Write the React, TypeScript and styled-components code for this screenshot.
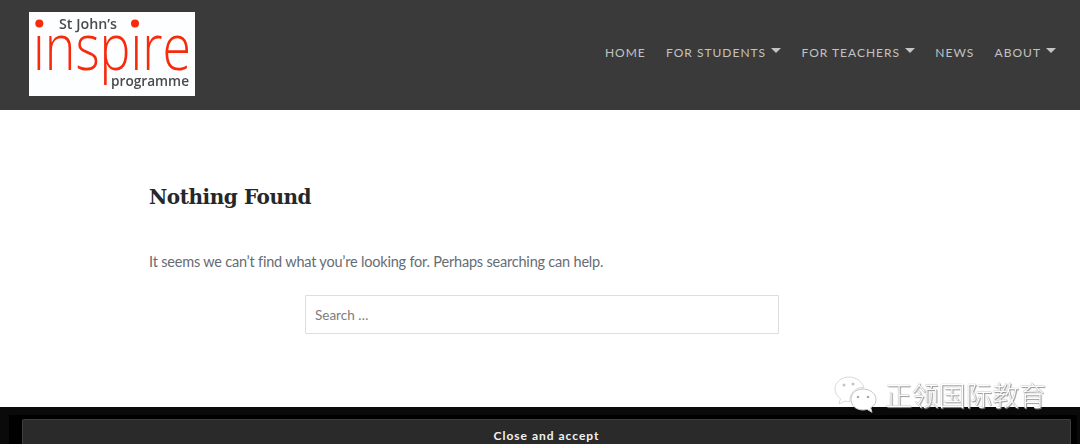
import styled, { createGlobalStyle } from 'styled-components';

const GlobalStyle = createGlobalStyle`
	html, body {
		margin: 0;
		padding: 0;
		height: 444px;
		overflow: hidden;
		background: #fff;
		font-family: Lato, "Liberation Sans", sans-serif;
	}
	* {
		box-sizing: border-box;
	}
`;

const Page = styled.div`
	position: relative;
	display: flex;
	flex-direction: column;
	width: 1080px;
	height: 444px;
	overflow: hidden;
`;

const Header = styled.header`
	display: flex;
	justify-content: space-between;
	align-items: center;
	flex: 0 0 110px;
	padding: 0 24px 0 29px;
	background: #3a3a3a;
`;

const LogoBox = styled.a`
	display: block;
	width: 166px;
	height: 84px;
	margin-top: -2px;
	background: #fcfeff;
	filter: blur(0.4px);

	svg {
		display: block;
	}
`;

const Nav = styled.nav`
	display: flex;
	align-items: center;
	gap: 20.3px;
	margin-top: -6px;
`;

const NavItem = styled.a`
	display: flex;
	align-items: center;
	gap: 5px;
	color: #c2c2c2;
	font-size: 12px;
	font-weight: 400;
	letter-spacing: 1px;
	text-transform: uppercase;
	white-space: nowrap;
`;

const Caret = styled.span`
	width: 0;
	height: 0;
	margin-top: -3px;
	border-top: 5px solid #c4c4c4;
	border-left: 5px solid transparent;
	border-right: 5px solid transparent;
`;

const Main = styled.main`
	flex: 1;
	min-height: 0;
	padding: 73px 0 0 149px;
	background: #fff;
`;

const Title = styled.h1`
	margin: 0;
	color: #252729;
	font-family: "DejaVu Serif", "Liberation Serif", serif;
	font-size: 20px;
	font-weight: 700;
	line-height: 28px;
	letter-spacing: -0.45px;
`;

const Message = styled.p`
	margin: 39px 0 0;
	color: #666c74;
	font-size: 14.5px;
	line-height: 24px;
	letter-spacing: -0.2px;
`;

const SearchForm = styled.form`
	margin: 21px 0 0 156px;
`;

const SearchInput = styled.input`
	display: block;
	width: 474px;
	height: 39px;
	padding: 0 9px;
	border: 1px solid #dddddd;
	border-radius: 1px;
	background: #fff;
	font-family: Lato, "Liberation Sans", sans-serif;
	font-size: 13.5px;

	&::placeholder {
		color: #7d7d7d;
		opacity: 1;
	}
`;

const CookieBar = styled.div`
	flex: 0 0 37px;
	min-height: 0;
	overflow: hidden;
	padding: 4px 6px 0 13px;
	background: #000;
	border-style: solid;
	border-color: #0a0a0a;
	border-width: 8px 3px 0 9px;
`;

const CookieButton = styled.button`
	display: block;
	width: 100%;
	height: 32px;
	padding: 0;
	border: 1px solid #3f3f3f;
	border-bottom: 0;
	border-radius: 2px 2px 0 0;
	background: #2a2a2a;
	color: #f2f2f2;
	font-family: Lato, "Liberation Sans", sans-serif;
	font-size: 12px;
	font-weight: 700;
	letter-spacing: 1px;
	line-height: 16px;
	text-align: center;
`;

const Watermark = styled.div`
	position: absolute;
	left: 834px;
	top: 375px;
	display: flex;
	align-items: center;
	gap: 7px;
	filter: blur(0.4px);
`;

const WatermarkText = styled.span`
	color: #fdfdfd;
	font-family: "Noto Sans CJK SC", sans-serif;
	font-size: 27px;
	font-weight: 300;
	line-height: 40px;
	letter-spacing: -0.2px;
	text-shadow: 0 0 1px #777, 1px 1px 1px #999;
`;

const Logo = () => (
	<svg width='166' height='84' viewBox='0 0 166 84'>
		<defs>
			<clipPath id='noDots'>
				<rect x='0' y='22' width='166' height='62' />
			</clipPath>
		</defs>
		<circle cx='10.300' cy='11.500' r='4' fill='#f72a0c' />
		<circle cx='106' cy='11.500' r='4' fill='#f72a0c' />
		<text x='30' y='17' fontFamily='"Open Sans", sans-serif' fontSize='14.500' fontWeight='600' fill='#4b4b4b' textLength='58' lengthAdjust='spacingAndGlyphs'>
			St John’s
		</text>
		<text x='4' y='58' clipPath='url(#noDots)' fontFamily='"Open Sans", sans-serif' fontSize='65' fontWeight='300' fill='#f72a0c' textLength='158' lengthAdjust='spacingAndGlyphs'>
			inspire
		</text>
		<text x='82' y='74' fontFamily='"Open Sans", sans-serif' fontSize='15' fontWeight='600' fill='#4b4b4b' textLength='78' lengthAdjust='spacingAndGlyphs'>
			programme
		</text>
	</svg>
);

const WeChatIcon = () => (
	<svg width='44' height='38' viewBox='0 0 44 38'>
		<path
			d='M15 1C7 1 1 6.500 1 13c0 4 2 7 5.500 9.500L5 28l6-3c2 .6 3 .8 5 .8C15 17 22 11 30 11.500 28 5.500 22 1 15 1z'
			fill='#fff'
			stroke='#d8d8d8'
			strokeWidth='1'
		/>
		<path
			d='M29 13c-7 0-12 4.500-12 10.500S22 34 29 34c1.500 0 2.500-.2 4-.7l5 3-1.300-4.500C40.500 29.500 42 27 42 23.500 42 17.500 36 13 29 13z'
			fill='#fff'
			stroke='#c4c4c4'
			strokeWidth='1'
		/>
		<circle cx='10' cy='9' r='1.500' fill='#c4c4c4' />
		<circle cx='19' cy='8' r='1.500' fill='#c4c4c4' />
		<circle cx='24' cy='21' r='1.300' fill='#aaa' />
		<circle cx='34' cy='21' r='1.300' fill='#aaa' />
	</svg>
);

export default function App() {
	return (
		<>
			<GlobalStyle />
			<Page>
				<Header>
					<LogoBox>
						<Logo />
					</LogoBox>
					<Nav>
						<NavItem>Home</NavItem>
						<NavItem>
							For Students <Caret />
						</NavItem>
						<NavItem>
							For Teachers <Caret />
						</NavItem>
						<NavItem>News</NavItem>
						<NavItem>
							About <Caret />
						</NavItem>
					</Nav>
				</Header>
				<Main>
					<Title>Nothing Found</Title>
					<Message>It seems we can’t find what you’re looking for. Perhaps searching can help.</Message>
					<SearchForm>
						<SearchInput placeholder='Search …' />
					</SearchForm>
				</Main>
				<CookieBar>
					<CookieButton>Close and accept</CookieButton>
				</CookieBar>
				<Watermark>
					<WeChatIcon />
					<WatermarkText>正领国际教育</WatermarkText>
				</Watermark>
			</Page>
		</>
	);
}
